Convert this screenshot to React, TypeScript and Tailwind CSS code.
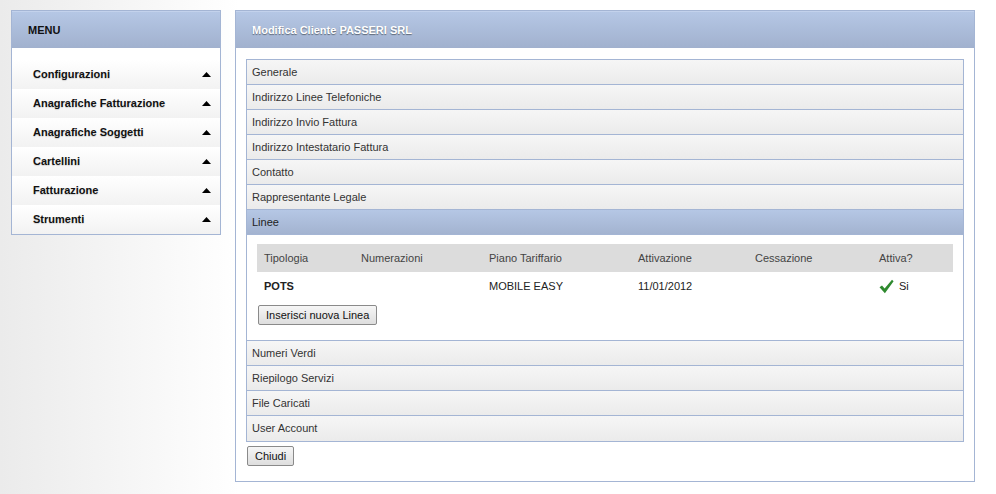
const menu = [
  "Configurazioni",
  "Anagrafiche Fatturazione",
  "Anagrafiche Soggetti",
  "Cartellini",
  "Fatturazione",
  "Strumenti",
]

const before = [
  "Generale",
  "Indirizzo Linee Telefoniche",
  "Indirizzo Invio Fattura",
  "Indirizzo Intestatario Fattura",
  "Contatto",
  "Rappresentante Legale",
]

const after = ["Numeri Verdi", "Riepilogo Servizi", "File Caricati", "User Account"]

const cols = [
  { label: "Tipologia", w: "w-[97px]" },
  { label: "Numerazioni", w: "w-[128px]" },
  { label: "Piano Tariffario", w: "w-[149px]" },
  { label: "Attivazione", w: "w-[117px]" },
  { label: "Cessazione", w: "w-[124px]" },
  { label: "Attiva?", w: "" },
]

function Arrow() {
  return (
    <svg width="9" height="5" viewBox="0 0 9 5" className="block">
      <path d="M4.5 0 L9 5 L0 5 Z" fill="#000" />
    </svg>
  )
}

function Check() {
  return (
    <svg width="15" height="15" viewBox="0 0 15 15" className="block">
      <path d="M0.5 8.2 L3 6.4 L5.6 9.4 L13 0.8 L14.6 2.2 L5.9 14.2 Z" fill="#2f8a2f" />
    </svg>
  )
}

function Row({ label }: { label: string }) {
  return (
    <div className="h-[25px] flex items-center pl-[5px] border-b border-[#a4b5d4] last:border-b-0 bg-gradient-to-b from-[#f6f6f6] to-[#ebebeb] text-[11px] text-[#333]">
      {label}
    </div>
  )
}

export default function App() {
  return (
    <div
      className="min-h-[494px] w-full bg-gradient-to-r from-[#ebebeb] to-white to-[24%] pt-[10px] flex items-start"
      style={{ fontFamily: '"Liberation Sans", Arial, sans-serif' }}
    >
      <div className="ml-[11px] w-[210px] border border-[#a4b5d4] bg-white">
        <div className="h-[37px] flex items-center pl-[16px] bg-gradient-to-b from-[#b5c7e5] to-[#a1b1ce] border-t border-[#c3d2ec] text-[11px] font-bold text-[#111]">
          MENU
        </div>
        <div className="pt-[12px]">
          {menu.map((m) => (
            <div
              key={m}
              className="h-[29px] flex items-center justify-between pl-[21px] pr-[9px] bg-gradient-to-b from-white to-[#f2f2f2] text-[11px] font-bold text-[#111] [text-shadow:0_1px_1px_rgba(0,0,0,0.15)]"
            >
              <span>{m}</span>
              <Arrow />
            </div>
          ))}
        </div>
      </div>

      <div className="ml-[14px] w-[740px] border border-[#a4b5d4] bg-white pb-[15px]">
        <div className="h-[37px] flex items-center pl-[16px] bg-gradient-to-b from-[#b5c7e5] to-[#a1b1ce] border-t border-[#c3d2ec] text-[11px] font-bold text-white [text-shadow:0_1px_1px_rgba(0,0,0,0.45)]">
          Modifica Cliente PASSERI SRL
        </div>
        <div className="px-[10px] pt-[11px]">
          <div className="border border-[#a4b5d4]">
            {before.map((b) => (
              <Row key={b} label={b} />
            ))}
            <div className="h-[25px] flex items-center pl-[5px] border-b border-[#a4b5d4] bg-gradient-to-b from-[#b5c7e5] to-[#a3b3d0] text-[11px] text-[#222]">
              Linee
            </div>
            <div className="bg-white px-[10px] pt-[9px] pb-[15px] border-b border-[#a4b5d4]">
              <table className="w-full border-collapse text-[11px] text-[#222]">
                <thead>
                  <tr className="bg-[#dcdcdc] h-[28px]">
                    {cols.map((c) => (
                      <th key={c.label} className={`${c.w} text-left font-normal pl-[7px] text-[#444]`}>
                        {c.label}
                      </th>
                    ))}
                  </tr>
                </thead>
                <tbody>
                  <tr className="h-[28px]">
                    <td className="pl-[7px] font-bold">POTS</td>
                    <td className="pl-[7px]"></td>
                    <td className="pl-[7px]">MOBILE EASY</td>
                    <td className="pl-[7px]">11/01/2012</td>
                    <td className="pl-[7px]"></td>
                    <td className="pl-[7px]">
                      <div className="flex items-center gap-[5px]">
                        <Check />
                        <span>Si</span>
                      </div>
                    </td>
                  </tr>
                </tbody>
              </table>
              <button className="block mt-[5px] ml-[1px] h-[20px] px-[7px] border border-[#8a8a8a] rounded-[2px] bg-gradient-to-b from-[#f6f6f6] to-[#dedede] text-[11px] text-[#111]">
                Inserisci nuova Linea
              </button>
            </div>
            {after.map((a) => (
              <Row key={a} label={a} />
            ))}
          </div>
          <button className="block mt-[4px] ml-[1px] h-[20px] px-[7px] border border-[#8a8a8a] rounded-[2px] bg-gradient-to-b from-[#f6f6f6] to-[#dedede] text-[11px] text-[#111]">
            Chiudi
          </button>
        </div>
      </div>
    </div>
  )
}
